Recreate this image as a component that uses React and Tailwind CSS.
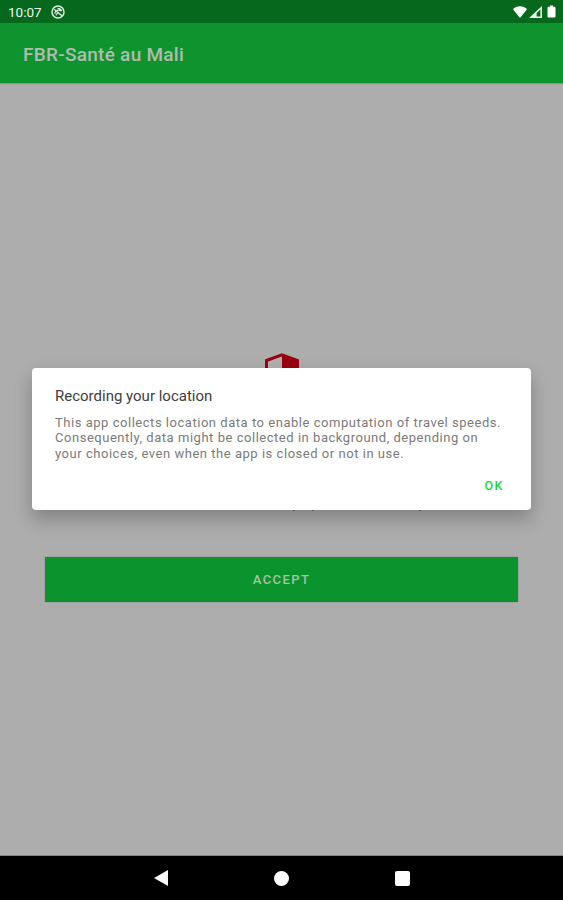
import React from "react";

const StatusBar = () => (
  <div className="flex h-[23px] items-center justify-between bg-[#06681d] pl-2 pr-[7px] text-white">
    <div className="flex items-center gap-[10px]">
      <span className="w-[33px] whitespace-nowrap pt-px text-[13.5px] leading-5 text-[#f0f5f0]">
        10:07
      </span>
      <svg className="mt-px h-[14px] w-[14px]" viewBox="0 0 14 14" fill="none">
        <circle cx="7" cy="7" r="6" stroke="#dfeadf" strokeWidth="1.5" />
        <path
          d="M3 4.2l8 6.6M3.6 8.6c1-3 3.4-4.4 6.6-2.8M5 10.2c.8-2 2-2.6 3.4-2M6.5 3.5c2 0 3.6 1 4.3 2.6"
          stroke="#dfeadf"
          strokeWidth="1.3"
        />
      </svg>
    </div>
    <div className="flex items-center">
      {/* Wifi */}
      <svg className="h-[12px] w-[14px]" viewBox="0 0 14 12" fill="white">
        <path d="M0 3.2C4-.6 10-.6 14 3.2L7 12z" />
      </svg>
      {/* Signal */}
      <svg className="ml-[2px] h-[12px] w-[13px]" viewBox="0 0 13 12">
        <path
          d="M13 0v12H0z M11.4 3.4L7.6 7v3.6h3.8z"
          fill="#eef5ee"
          fillRule="evenodd"
        />
      </svg>
      {/* Battery */}
      <svg className="ml-[5px] h-[13px] w-[9px]" viewBox="0 0 9 12" fill="white">
        <path d="M3 0h3v1.3h1.5q1 0 1 1V11q0 1-1 1h-6q-1 0-1-1V2.3q0-1 1-1H3z" />
      </svg>
    </div>
  </div>
);

const LocationDialog = () => (
  <div className="absolute left-8 top-[368px] flex h-[142px] w-[499px] flex-col rounded-[4px] bg-white pl-[23px] pr-[27px] pt-[18px] shadow-[0_9px_18px_1px_rgba(0,0,0,0.23)]">
    <h2 className="text-[15px] leading-5 text-[#404040]">
      Recording your location
    </h2>
    <p className="mt-[8.5px] whitespace-nowrap text-[13px] leading-[15.5px] tracking-[0.53px] text-[#7a7a7a]">
      This app collects location data to enable computation of travel speeds.
      <br />
      Consequently, data might be collected in background, depending on
      <br />
      your choices, even when the app is closed or not in use.
    </p>
    <button
      type="button"
      className="mt-[15px] self-end text-[12.5px] font-medium leading-5 tracking-[1.5px] text-[#1ad93c]"
    >
      OK
    </button>
  </div>
);

const NavigationBar = () => (
  <div className="flex h-[44px] items-center justify-center gap-[106px] bg-black">
    <svg className="h-4 w-[14px]" viewBox="0 0 14 16" fill="white">
      <path d="M14 0v16L0 8z" />
    </svg>
    <div className="h-[15px] w-[15px] rounded-full bg-white" />
    <div className="h-[15px] w-[15px] rounded-[2px] bg-white" />
  </div>
);

const App = () => {
  return (
    <div className="relative flex h-[900px] w-[563px] flex-col overflow-hidden bg-[#adadad] font-[Roboto,sans-serif]">
      <StatusBar />
      <header className="flex h-[60px] items-center bg-[#0d942f] pl-[23px] shadow-[0_1px_1px_rgba(0,0,0,0.15)]">
        <h1 className="pt-[3px] text-[19px] font-medium leading-6 tracking-[0.27px] text-[#b2bbb0]">
          FBR-Santé au Mali
        </h1>
      </header>

      <main className="flex flex-1 flex-col items-center border-b border-[#858585] px-[45px] pt-[270px]">
        {/* Shield logo */}
        <svg className="h-10 w-[34px]" viewBox="0 0 34 40">
          <path
            d="M1.5 7.5L17 1.8l15.5 5.7V20c0 8-6 15-15.5 18C7.5 35 1.5 28 1.5 20z"
            fill="#b5b0b0"
            stroke="#98000f"
            strokeWidth="3"
          />
          <path d="M17 1l16 6v13c0 8-6 16-16 19z" fill="#98000f" />
        </svg>
        {/* Descenders of the policy text that show below the dialog */}
        <svg className="mr-[96px] mt-[117px] h-px w-[130px] self-end" viewBox="0 0 130 1" fill="#6b6b6b">
          <path d="M1 0h2v1H1zM20 0h2v1h-2zM127 0h2v1h-2z" />
        </svg>
        <button
          type="button"
          className="mt-[46px] h-[45px] w-full bg-[#0b942d] text-[13px] font-medium tracking-[1.4px] text-[#a6c3a6] shadow-[0_0_1px_rgba(0,0,0,0.4)]"
        >
          ACCEPT
        </button>
      </main>

      <NavigationBar />
      <LocationDialog />
    </div>
  );
};

export default App;
